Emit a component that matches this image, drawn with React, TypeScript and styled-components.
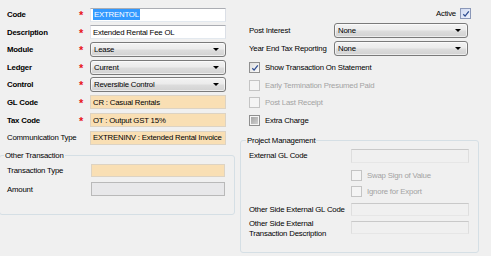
import styled, { createGlobalStyle, css } from "styled-components";

type Tone = "white" | "peach" | "grey" | "off";
type Tick = "on" | "hot" | "off" | "dis" | "mixed";

const GlobalStyle = createGlobalStyle`
  html, body {
    margin: 0;
    padding: 0;
    background: #f0f0f0;
  }
  body {
    font-family: "Liberation Sans", Arial, sans-serif;
  }
`;

const Page = styled.div`
  width: 491px;
  height: 256px;
  overflow: hidden;
  background: #f0f0f0;
  display: flex;
  font-size: 7.8px;
  letter-spacing: -0.2px;
  color: #000;
`;

const LeftCol = styled.div`
  width: 240px;
  padding-top: 7px;
  display: flex;
  flex-direction: column;
  box-sizing: border-box;
`;

const RightCol = styled.div`
  width: 251px;
  padding-top: 8px;
  display: flex;
  flex-direction: column;
  box-sizing: border-box;
`;

const Row = styled.div<{ $h?: number; $gap?: number; $pad?: number }>`
  display: flex;
  align-items: center;
  height: ${(p) => p.$h ?? 15}px;
  margin-bottom: ${(p) => p.$gap ?? 2.6}px;
  padding-left: ${(p) => p.$pad ?? 7}px;
  flex-shrink: 0;
`;

const TopRow = styled(Row)`
  align-items: flex-start;
`;

const ActiveRow = styled.div`
  display: flex;
  justify-content: flex-end;
  align-items: center;
  gap: 4px;
  height: 11px;
  padding-right: 20px;
  margin-bottom: 4px;
`;

const Label = styled.span<{ $w: number; $bold?: boolean; $dim?: boolean }>`
  width: ${(p) => p.$w}px;
  flex-shrink: 0;
  white-space: nowrap;
  font-weight: ${(p) => (p.$bold ? 700 : 400)};
  color: ${(p) => (p.$dim ? "#a3a3a3" : "#000")};
`;

const TwoLine = styled.span<{ $w: number }>`
  width: ${(p) => p.$w}px;
  flex-shrink: 0;
  line-height: 10px;
  margin-top: -2px;
`;

const Star = styled.span`
  width: 11px;
  flex-shrink: 0;
  color: #e8141b;
  font-weight: 700;
  font-size: 11px;
  line-height: 11px;
  margin-top: 2px;
`;

const tones = {
  white: css`
    background: #fff;
    border-color: #abadb3 #dbdfe6 #e3e9ef #e2e3ea;
  `,
  peach: css`
    background: #f9dfb4;
    border-color: #ddd3c3;
  `,
  grey: css`
    background: #e8e8ea;
    border-color: #b9b9b9;
  `,
  off: css`
    background: #f0f0f0;
    border-color: #c9c9c9 #dedede #e6e6e6 #dedede;
  `,
};

const Field = styled.div<{ $tone: Tone; $w: number; $h?: number }>`
  box-sizing: border-box;
  width: ${(p) => p.$w}px;
  height: ${(p) => p.$h ?? 14}px;
  border: 1px solid;
  ${(p) => tones[p.$tone]}
  padding: 0 2px;
  display: flex;
  align-items: center;
  white-space: nowrap;
  overflow: hidden;
`;

const Selected = styled.span`
  background: #3399ff;
  color: #fff;
  padding: 1px 1px;
`;

const Combo = styled.div<{ $w: number }>`
  box-sizing: border-box;
  width: ${(p) => p.$w}px;
  height: 15px;
  border: 1px solid #7a7a7a;
  border-radius: 3px;
  background: linear-gradient(#f3f3f3 0%, #ebebeb 48%, #dddddd 52%, #d2d2d2 100%);
  box-shadow: inset 0 0 0 1px rgba(255, 255, 255, 0.6);
  display: flex;
  align-items: center;
  justify-content: space-between;
  padding: 0 6px 0 3px;
`;

const Arrow = styled.span`
  width: 0;
  height: 0;
  border-left: 3px solid transparent;
  border-right: 3px solid transparent;
  border-top: 3px solid #000;
`;

const boxLook = {
  on: css`
    border-color: #8f8f8f;
    background: linear-gradient(135deg, #dedede, #fbfbfb);
  `,
  hot: css`
    border-color: #8b98b8;
    background: linear-gradient(135deg, #d0daf2, #eef2fc);
  `,
  off: css`
    border-color: #8f8f8f;
    background: linear-gradient(135deg, #dedede, #fbfbfb);
  `,
  dis: css`
    border-color: #c4c4c4;
    background: #f4f4f4;
  `,
  mixed: css`
    border-color: #8f8f8f;
    background: #f6f6f6;
  `,
};

const Box = styled.span<{ $state: Tick }>`
  box-sizing: border-box;
  width: 11px;
  height: 11px;
  border: 1px solid;
  ${(p) => boxLook[p.$state]}
  display: flex;
  align-items: center;
  justify-content: center;
  flex-shrink: 0;
`;

const Fill = styled.span`
  width: 7px;
  height: 7px;
  background: linear-gradient(135deg, #a5a5a5, #cfcfcf);
`;

const CheckLine = styled.div<{ $h?: number; $pad?: number }>`
  display: flex;
  align-items: center;
  gap: 5px;
  height: ${(p) => p.$h ?? 17.5}px;
  padding-left: ${(p) => p.$pad ?? 9}px;
  flex-shrink: 0;
`;

const CheckText = styled.span<{ $dim?: boolean }>`
  color: ${(p) => (p.$dim ? "#a3a3a3" : "#000")};
  white-space: nowrap;
`;

const Group = styled.fieldset<{ $w: number; $left: number; $top: number; $h: number }>`
  box-sizing: border-box;
  width: ${(p) => p.$w}px;
  height: ${(p) => p.$h}px;
  margin: ${(p) => p.$top}px 0 0 ${(p) => p.$left}px;
  padding: 0;
  border: 1px solid #d5dfe5;
  border-radius: 3px;
  display: flex;
  flex-direction: column;
  flex-shrink: 0;
`;

const Legend = styled.legend<{ $x: number }>`
  margin-left: ${(p) => p.$x}px;
  padding: 0 1px;
  line-height: 10px;
  height: 10px;
`;

const Check = ({ state }: { state: Tick }) => (
  <Box $state={state}>
    {(state === "on" || state === "hot") && (
      <svg width="8" height="8" viewBox="0 0 8 8">
        <path d="M1.3 4.2 L3.1 6.1 L6.8 1.4" fill="none" stroke="#2d4c91" strokeWidth="1.3" />
      </svg>
    )}
    {state === "mixed" && <Fill />}
  </Box>
);

const App = () => {
  return (
    <>
      <GlobalStyle />
      <Page>
        <LeftCol>
          <Row>
            <Label $w={72} $bold>Code</Label>
            <Star>*</Star>
            <Field $tone="white" $w={136}>
              <Selected>EXTRENTOL</Selected>
            </Field>
          </Row>
          <Row>
            <Label $w={72} $bold>Description</Label>
            <Star>*</Star>
            <Field $tone="white" $w={136}>Extended Rental Fee OL</Field>
          </Row>
          <Row>
            <Label $w={72} $bold>Module</Label>
            <Star>*</Star>
            <Combo $w={136}>Lease<Arrow /></Combo>
          </Row>
          <Row>
            <Label $w={72} $bold>Ledger</Label>
            <Star>*</Star>
            <Combo $w={136}>Current<Arrow /></Combo>
          </Row>
          <Row>
            <Label $w={72} $bold>Control</Label>
            <Star>*</Star>
            <Combo $w={136}>Reversible Control<Arrow /></Combo>
          </Row>
          <Row>
            <Label $w={72} $bold>GL Code</Label>
            <Star>*</Star>
            <Field $tone="peach" $w={136}>CR : Casual Rentals</Field>
          </Row>
          <Row>
            <Label $w={72} $bold>Tax Code</Label>
            <Star>*</Star>
            <Field $tone="peach" $w={136}>OT : Output GST 15%</Field>
          </Row>
          <Row>
            <Label $w={83}>Communication Type</Label>
            <Field $tone="peach" $w={136}>EXTRENINV : Extended Rental Invoice</Field>
          </Row>

          <Group $w={236} $left={-1} $top={2.8} $h={64}>
            <Legend $x={4}>Other Transaction</Legend>
            <Row $h={13} $gap={5.5} style={{ marginTop: 3 }}>
              <Label $w={84}>Transaction Type</Label>
              <Field $tone="peach" $w={134} $h={13} />
            </Row>
            <Row $h={14}>
              <Label $w={84}>Amount</Label>
              <Field $tone="grey" $w={134} />
            </Row>
          </Group>
        </LeftCol>

        <RightCol>
          <ActiveRow>
            <span>Active</span>
            <Check state="hot" />
          </ActiveRow>
          <Row $pad={9} $gap={3}>
            <Label $w={85}>Post Interest</Label>
            <Combo $w={134}>None<Arrow /></Combo>
          </Row>
          <Row $pad={9} $gap={3}>
            <Label $w={85}>Year End Tax Reporting</Label>
            <Combo $w={134}>None<Arrow /></Combo>
          </Row>
          <CheckLine>
            <Check state="on" />
            <CheckText>Show Transaction On Statement</CheckText>
          </CheckLine>
          <CheckLine>
            <Check state="dis" />
            <CheckText $dim>Early Termination Presumed Paid</CheckText>
          </CheckLine>
          <CheckLine>
            <Check state="dis" />
            <CheckText $dim>Post Last Receipt</CheckText>
          </CheckLine>
          <CheckLine>
            <Check state="mixed" />
            <CheckText>Extra Charge</CheckText>
          </CheckLine>

          <Group $w={239} $left={0} $top={6.7} $h={117}>
            <Legend $x={5}>Project Management</Legend>
            <Row $pad={8} $h={14} $gap={5} style={{ marginTop: 3 }}>
              <Label $w={102}>External GL Code</Label>
              <Field $tone="off" $w={118} />
            </Row>
            <CheckLine $pad={110} $h={16}>
              <Check state="dis" />
              <CheckText $dim>Swap Sign of Value</CheckText>
            </CheckLine>
            <CheckLine $pad={110} $h={16}>
              <Check state="dis" />
              <CheckText $dim>Ignore for Export</CheckText>
            </CheckLine>
            <Row $pad={8} $h={13} $gap={5} style={{ marginTop: 3 }}>
              <Label $w={102}>Other Side External GL Code</Label>
              <Field $tone="off" $w={118} $h={13} />
            </Row>
            <TopRow $pad={8} $h={16}>
              <TwoLine $w={102}>
                Other Side External
                <br />
                Transaction Description
              </TwoLine>
              <Field $tone="off" $w={118} $h={13} />
            </TopRow>
          </Group>
        </RightCol>
      </Page>
    </>
  );
};

export default App;
